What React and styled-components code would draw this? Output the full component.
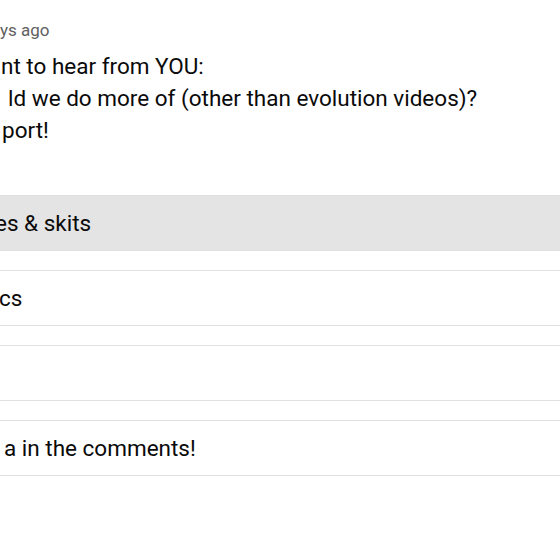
import React from "react";
import styled, { createGlobalStyle } from "styled-components";

const GlobalStyle = createGlobalStyle`
  html, body {
    margin: 0;
    padding: 0;
    background: #ffffff;
    overflow: hidden;
  }
  body {
    font-family: Roboto, "Liberation Sans", Arial, sans-serif;
    color: #0f0f0f;
  }
`;

const Post = styled.div`
  width: 560px;
  height: 560px;
  overflow: hidden;
  padding-top: 20px;
  box-sizing: border-box;
`;

const Meta = styled.div`
  font-size: 17px;
  line-height: 20px;
  color: #606060;
`;

const Body = styled.div`
  margin-top: 10px;
  font-size: 22.5px;
  line-height: 32px;
  color: #0a0a0a;
`;

const Line = styled.div`
  margin-left: ${({ $indent }) => $indent}px;
  white-space: nowrap;
`;

const Poll = styled.div`
  margin-top: 49px;
  display: flex;
  flex-direction: column;
  gap: 19px;
  width: 620px;
`;

const Option = styled.div`
  height: 56px;
  box-sizing: border-box;
  border: 1px solid #e0e0e0;
  border-left: none;
  background: ${({ $selected }) => ($selected ? "#e4e4e4" : "#ffffff")};
  display: flex;
  align-items: center;
  font-size: 22.5px;
  color: #0a0a0a;
  white-space: nowrap;
`;

const OptionText = styled.span`
  margin-left: ${({ $indent }) => $indent}px;
`;

const options = [
  { label: "es & skits", indent: -5, selected: true },
  { label: "cs", indent: -1 },
  { label: "", indent: 0 },
  { label: "a in the comments!", indent: 4 },
];

const App = () => {
  return (
    <>
      <GlobalStyle />
      <Post>
        <Meta>ys ago</Meta>
        <Body>
          <Line $indent={1}>nt to hear from YOU:</Line>
          <Line $indent={8}>ld we do more of (other than evolution videos)?</Line>
          <Line $indent={2}>port!</Line>
        </Body>
        <Poll>
          {options.map((o, i) => (
            <Option key={i} $selected={o.selected}>
              <OptionText $indent={o.indent}>{o.label}</OptionText>
            </Option>
          ))}
        </Poll>
      </Post>
    </>
  );
};

export default App;
